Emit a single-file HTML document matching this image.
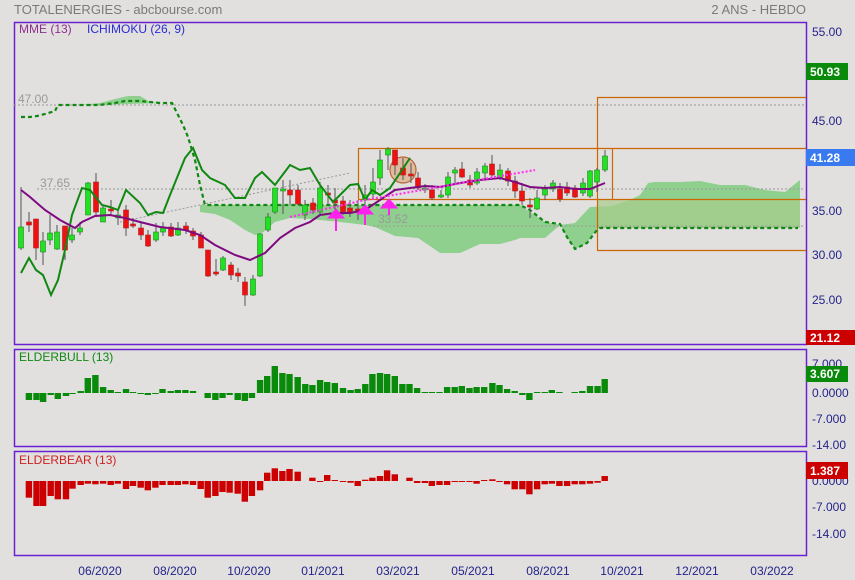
<!DOCTYPE html>
<html><head><meta charset="utf-8"><style>
html,body{margin:0;padding:0;background:#e1e0df;width:855px;height:580px;overflow:hidden}
svg{display:block;font-family:"Liberation Sans",Arial,sans-serif}
</style></head><body>
<svg id="s" width="855" height="580" xmlns="http://www.w3.org/2000/svg">
<rect width="855" height="580" fill="#e1e0df"/>
<text x="14" y="14" font-size="13" fill="#7a7a7a">TOTALENERGIES - abcbourse.com</text>
<text x="806" y="14" font-size="13" fill="#7a7a7a" text-anchor="end">2 ANS - HEBDO</text>
<rect x="14.5" y="22.5" width="792" height="322" fill="none" stroke="#6a1fd0" stroke-width="1.5"/>
<rect x="14.5" y="349.5" width="792" height="97" fill="none" stroke="#6a1fd0" stroke-width="1.5"/>
<rect x="14.5" y="451.5" width="792" height="104" fill="none" stroke="#6a1fd0" stroke-width="1.5"/>
<text x="19" y="33" font-size="12" fill="#8e2f8e">MME (13)</text>
<text x="87" y="33" font-size="12" fill="#2a2ad8">ICHIMOKU (26, 9)</text>
<text x="19" y="361" font-size="12" fill="#118811">ELDERBULL (13)</text>
<text x="19" y="464" font-size="12" fill="#cc2222">ELDERBEAR (13)</text>
<path d="M80,105 L100,103 L115,99 L128,96 L140,96 L150,102 L160,103 L100,105 Z" fill="#8fd08f"/>
<path d="M200,205 L520,205 L530,212 L545,222 L556,224 L560,225 L545,238 L520,238 L515,240 L500,244 L480,244 L460,253 L440,253 L430,246 L418,238 L395,236 L375,227 L365,225 L340,222 L310,219 L290,218 L275,222 L262,233 L255,235 L245,230 L230,220 L215,214 L200,212 Z" fill="#8fd08f"/>
<path d="M560,225 L575,223 L590,207 L612,206 L630,200 L640,195 L648,183 L655,182 L680,182 L700,181 L720,185 L745,185 L765,190 L785,192 L800,180 L800,228 L597,228 L587,243 L575,249 L567,237 Z" fill="#8fd08f"/>
<rect x="597" y="199" width="203" height="29" fill="#a8cc8c" opacity="0.7"/>
<g stroke="#999" stroke-dasharray="2,2" stroke-width="1">
<line x1="14" y1="105" x2="805" y2="105"/>
<line x1="37" y1="189" x2="805" y2="189"/>
<line x1="373" y1="226" x2="805" y2="226"/>
<line x1="120" y1="222" x2="350" y2="173"/>
</g>
<text x="18" y="103" font-size="12" fill="#999">47.00</text>
<text x="40" y="187" font-size="12" fill="#999">37.65</text>
<text x="378" y="223" font-size="12" fill="#999">33.52</text>
<g stroke="#cc6600" stroke-width="1.2" fill="none">
<line x1="358" y1="148.5" x2="806" y2="148.5"/>
<line x1="358" y1="199.5" x2="806" y2="199.5"/>
<line x1="358.5" y1="148" x2="358.5" y2="199"/>
<line x1="612.5" y1="148" x2="612.5" y2="199"/>
<line x1="597.5" y1="97" x2="597.5" y2="250"/>
<line x1="597" y1="97.5" x2="806" y2="97.5"/>
<line x1="597" y1="250.5" x2="806" y2="250.5"/>
</g>
<circle cx="403" cy="170" r="13" fill="rgba(220,140,80,0.45)" stroke="#b8663a" stroke-width="1.2"/>
<polyline fill="none" stroke="#118811" stroke-width="2.2" stroke-dasharray="4,3" points="21,117 30,117 37,116 45,114 55,111 58,105 80,105 100,105 115,103 125,101 140,101 150,102 160,103 172,103 183,125 188,137 195,160 200,185 205,205 240,205 520,205 530,210 545,222 560,224 567,237 575,249 587,243 597,230 600,228 798,228"/>
<g id="candles"></g>
<polyline fill="none" stroke="#118811" stroke-width="2" points="21,273 29,258 36,270 43,275 51,295 58,280 65,250 72,215 82,188 90,190 102,205 110,207 118,210 126,190 140,203 148,215 156,212 163,213 170,195 185,158 193,148 202,170 210,178 225,185 235,198 245,198 255,178 262,172 275,185 290,165 300,170 310,168 320,185 333,202 340,195 350,185 358,184 365,200 372,190 380,195 390,188 410,158"/>
<polyline fill="none" stroke="#800a80" stroke-width="2" points="21,190 30,197 45,210 60,220 75,228 82,222 95,216 110,215 125,218 140,222 160,227 185,230 200,235 215,245 235,255 250,260 265,253 280,238 295,228 310,222 320,215 335,213 350,213 365,210 380,200 395,190 410,188 425,186 440,187 460,183 480,180 500,178 515,182 530,187 545,188 560,187 575,189 590,189 605,183"/>
<polyline fill="none" stroke="#ff33ee" stroke-width="2.2" stroke-dasharray="2,2" points="290,217 365,200 535,170"/>
<g fill="#ff22ee" stroke="#ff22ee">
<path d="M328,218 L344,218 L336,209 Z"/><line x1="336" y1="218" x2="336" y2="231" stroke-width="2"/>
<path d="M357,214 L373,214 L365,205 Z"/><line x1="365" y1="214" x2="365" y2="225" stroke-width="2"/>
<path d="M381,208 L397,208 L389,199 Z"/><line x1="389" y1="208" x2="389" y2="215" stroke-width="2"/>
</g>
<g id="bars"></g>
<g font-size="12" fill="#23238a">
<text x="812" y="36">55.00</text>
<text x="812" y="125">45.00</text>
<text x="812" y="215">35.00</text>
<text x="812" y="259">30.00</text>
<text x="812" y="304">25.00</text>
<text x="812" y="368">7.000</text>
<text x="812" y="397">0.0000</text>
<text x="812" y="423">-7.000</text>
<text x="812" y="449">-14.00</text>
<text x="812" y="485">0.0000</text>
<text x="812" y="511">-7.000</text>
<text x="812" y="538">-14.00</text>
</g>
<rect x="806" y="63" width="42" height="17" fill="#0a8a0a"/>
<text x="810" y="76" font-size="12" font-weight="bold" fill="#fff">50.93</text>
<rect x="806" y="149" width="49" height="17" fill="#3a7af0"/>
<text x="810" y="162" font-size="12" font-weight="bold" fill="#fff">41.28</text>
<rect x="806" y="330" width="49" height="15" fill="#cc0000"/>
<text x="810" y="342" font-size="12" font-weight="bold" fill="#fff">21.12</text>
<rect x="806" y="366" width="42" height="16" fill="#0a8a0a"/>
<text x="810" y="378" font-size="12" font-weight="bold" fill="#fff">3.607</text>
<rect x="806" y="462" width="42" height="17" fill="#cc0000"/>
<text x="810" y="475" font-size="12" font-weight="bold" fill="#fff">1.387</text>
<g font-size="12" fill="#23238a" text-anchor="middle">
<text x="100" y="575">06/2020</text>
<text x="175" y="575">08/2020</text>
<text x="249" y="575">10/2020</text>
<text x="323" y="575">01/2021</text>
<text x="398" y="575">03/2021</text>
<text x="473" y="575">05/2021</text>
<text x="548" y="575">08/2021</text>
<text x="622" y="575">10/2021</text>
<text x="697" y="575">12/2021</text>
<text x="772" y="575">03/2022</text>
</g>
</svg>
<script>
var NS="http://www.w3.org/2000/svg";
function el(p,t,a){var e=document.createElementNS(NS,t);for(var k in a)e.setAttribute(k,a[k]);p.appendChild(e);return e;}
var C=[[21,227,248,187,250,'g'],[29,222,225,212,232,'r'],[36,219,248,219,260,'r'],[43,241,252,232,265,'g'],[50,233,240,215,245,'g'],[57,232,249,225,250,'g'],[65,226,250,226,260,'r'],[72,235,240,228,243,'g'],[80,228,232,222,235,'g'],[88,183,215,182,215,'g'],[96,182,212,173,215,'r'],[103,208,222,205,222,'g'],[111,209,211,200,215,'r'],[118,215,218,210,225,'g'],[126,210,228,205,236,'r'],[133,224,225,218,228,'r'],[141,228,235,222,240,'r'],[148,235,246,230,247,'r'],[156,232,240,223,242,'g'],[163,227,232,222,236,'g'],[171,227,236,223,237,'r'],[178,228,235,222,236,'g'],[186,226,230,222,234,'r'],[193,231,236,228,240,'r'],[201,235,248,232,248,'r'],[208,250,276,250,277,'r'],[216,272,274,259,276,'r'],[223,258,270,256,271,'g'],[231,265,275,262,280,'r'],[238,273,276,268,282,'r'],[245,282,295,277,306,'r'],[253,279,295,275,296,'g'],[260,234,276,233,277,'g'],[268,217,230,213,232,'g'],[275,188,212,188,214,'g'],[283,189,191,180,214,'g'],[290,190,195,180,205,'r'],[298,190,204,185,205,'r'],[305,205,215,200,220,'g'],[313,203,210,198,214,'r'],[320,188,212,182,215,'g'],[328,193,194,185,205,'r'],[335,200,203,188,210,'r'],[343,201,212,196,215,'r'],[350,208,212,200,217,'r'],[358,209,212,200,220,'r'],[365,195,200,185,210,'g'],[373,182,194,168,198,'g'],[380,160,178,150,185,'g'],[388,149,155,147,170,'g'],[395,150,165,150,175,'r'],[403,168,175,158,180,'r'],[411,174,175,163,183,'r'],[418,178,188,172,190,'r'],[425,188,190,184,193,'g'],[432,190,198,185,200,'r'],[441,195,197,190,198,'g'],[448,177,195,172,198,'g'],[455,170,173,167,185,'g'],[462,169,177,162,178,'r'],[470,180,185,175,188,'r'],[477,172,183,168,185,'g'],[485,166,173,163,180,'g'],[492,164,175,155,177,'r'],[500,170,178,164,180,'g'],[508,171,181,168,186,'r'],[515,181,191,176,198,'r'],[522,191,201,183,205,'r'],[530,205,207,198,218,'r'],[537,198,209,190,210,'g'],[545,189,195,185,200,'g'],[553,183,189,180,192,'g'],[560,189,199,183,202,'r'],[567,187,193,182,196,'r'],[575,188,197,185,198,'r'],[583,183,193,178,196,'g'],[590,171,196,170,198,'g'],[597,170,182,168,192,'g'],[605,156,170,150,172,'g']];
var g=document.getElementById('candles');
C.forEach(function(c){
 el(g,'line',{x1:c[0],x2:c[0],y1:c[3],y2:c[4],stroke:'#555','stroke-width':1});
 var h=Math.max(2,c[2]-c[1]);
 el(g,'rect',{x:c[0]-2.5,y:c[1],width:5,height:h,fill:c[5]=='g'?'#22e022':'#ee1111',stroke:c[5]=='g'?'#228822':'#aa2222','stroke-width':0.6});
});
var B=[[53,-7],[67,-7],[79,-9],[93,-2],[106,-6],[121,-3],[133,-1],[148,2],[161,15],[175,18],[189,6],[203,3],[216,1],[231,4],[244,1],[258,-1],[271,-2],[285,0],[298,4],[313,2],[326,3],[340,3],[354,2],[381,-5],[395,-7],[408,-5],[421,-2],[436,-7],[449,-8],[462,-5],[477,13],[490,17],[504,27],[518,20],[531,19],[546,16],[560,9],[573,8],[587,13],[600,11],[614,10],[629,5],[643,3],[656,4],[670,9],[683,19],[697,20],[710,19],[724,17],[738,9],[751,9],[765,5],[779,1],[792,1],[806,1],[820,6],[834,6],[847,7],[861,5],[874,6],[888,6],[903,10],[916,8],[930,4],[944,2],[958,-2],[971,-7],[985,1],[999,1],[1012,3],[1026,1],[1054,1],[1068,2],[1082,7],[1096,7],[1109,14]];
var R=[[53,-50],[67,-75],[79,-75],[93,-45],[106,-55],[121,-55],[133,-23],[148,-12],[161,-8],[175,-10],[189,-8],[203,-12],[216,-8],[231,-24],[244,-15],[258,-20],[271,-28],[285,-20],[298,-12],[313,-12],[326,-12],[340,-10],[354,-12],[368,-24],[381,-50],[395,-45],[408,-33],[421,-35],[436,-38],[449,-62],[462,-45],[477,-28],[490,25],[504,38],[518,30],[531,36],[546,28],[573,10],[587,-2],[600,18],[614,2],[629,-2],[643,-5],[656,-15],[670,4],[683,10],[697,15],[710,32],[724,20],[751,10],[765,-6],[779,-6],[792,-15],[806,-12],[820,-12],[834,-2],[847,-2],[861,-2],[874,-8],[888,2],[903,5],[916,-2],[930,-10],[944,-25],[958,-25],[971,-40],[985,-25],[999,-10],[1012,-8],[1026,-15],[1040,-15],[1054,-10],[1068,-10],[1082,-8],[1096,-5],[1109,15]];
var gb=document.getElementById('bars');
function bars(arr,z,col){arr.forEach(function(b){var x=b[0]/1.834-3.2,h=Math.abs(b[1])/3;if(h<1)h=1;var y=b[1]>0?z-h:z;el(gb,'rect',{x:x.toFixed(1),y:y.toFixed(1),width:6.4,height:h.toFixed(1),fill:col});});}
bars(B.map(function(b){return [b[0],b[1]*3]}),393,'#0a8a0a');
bars(R,481,'#cc0000');
</script>
</body></html>
